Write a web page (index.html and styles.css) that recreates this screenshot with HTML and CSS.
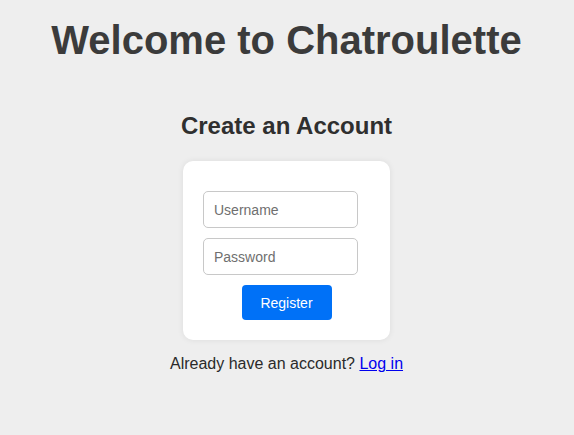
FILE: index.html
```html
<!DOCTYPE html>
<html>
<head>
<meta charset="utf-8">
<link rel="stylesheet" href="styles.css">
</head>
<body>
<div class="page">
  <h1 class="title">Welcome to Chatroulette</h1>
  <h2 class="subtitle">Create an Account</h2>
  <form class="card">
    <input class="field" type="text" placeholder="Username">
    <input class="field" type="password" placeholder="Password">
    <button class="btn" type="button">Register</button>
  </form>
  <p class="note">Already have an account? <a href="#" class="link">Log in</a></p>
</div>
</body>
</html>
```
FILE: styles.css
```css
html, body {
  margin: 0;
  padding: 0;
  background: #eeeeee;
}
body {
  font-family: "Liberation Sans", Arial, sans-serif;
  color: #333;
}
.page {
  display: flex;
  flex-direction: column;
  align-items: center;
  padding: 17px 1px 0 0;
}
.title {
  margin: 0;
  font-size: 40px;
  font-weight: bold;
  color: #3b3b3b;
  line-height: 46px;
}
.subtitle {
  margin: 49px 0 0;
  font-size: 24px;
  font-weight: bold;
  color: #2f2f2f;
  line-height: 28px;
}
.card {
  margin-top: 21px;
  width: 207px;
  box-sizing: border-box;
  background: #fff;
  border-radius: 10px;
  box-shadow: 0 0 6px rgba(0,0,0,0.08);
  padding: 30px 20px 20px;
  display: flex;
  flex-direction: column;
  align-items: flex-start;
}
.field {
  width: 155px;
  height: 37px;
  box-sizing: border-box;
  border: 1px solid #c8c8c8;
  border-radius: 5px;
  padding: 0 10px;
  font-family: "Liberation Sans", Arial, sans-serif;
  font-size: 14px;
  color: #333;
  margin: 0 0 10px;
  outline: none;
}
.field::placeholder {
  color: #6f6f6f;
}
.btn {
  align-self: center;
  width: 90px;
  height: 35px;
  border: none;
  border-radius: 4px;
  background: #0071f7;
  color: #fff;
  font-family: "Liberation Sans", Arial, sans-serif;
  font-size: 14px;
  margin-top: 0;
}
.note {
  margin: 15px 0 0;
  font-size: 16px;
  line-height: 18px;
  color: #2a2a2a;
}
.link {
  color: #0000ee;
}
```
